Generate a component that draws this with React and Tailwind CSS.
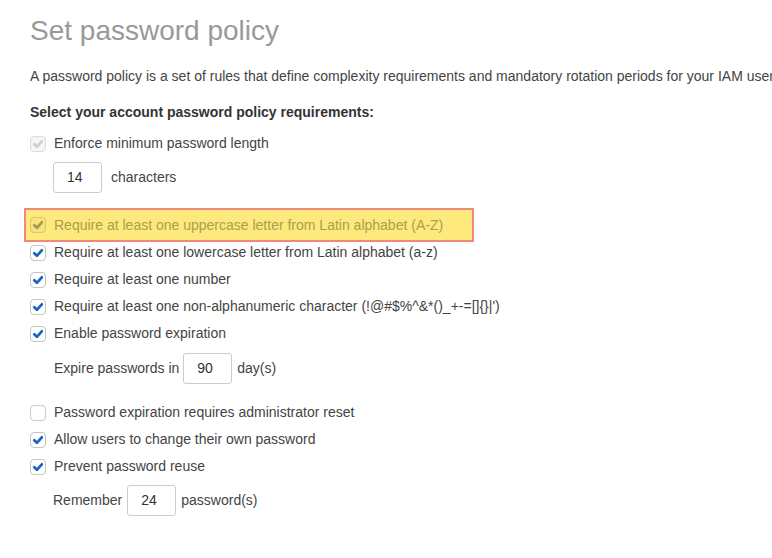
import React from "react";

const FONT = { fontFamily: '"Liberation Sans", Arial, sans-serif' };

/** Checkbox in the AWS console style. state: "on" | "off" | "disabled" | "dim" */
function Check({ state }) {
  const box =
    state === "off"
      ? "border-[#c9c9c9] bg-white"
      : state === "disabled"
      ? "border-[#dcdcdc] bg-[#f6f6f6]"
      : state === "dim"
      ? "border-[#d6c770] bg-[#fbe27e]"
      : "border-[#c4c4c4] bg-white";
  const stroke =
    state === "disabled" ? "#cfcfcf" : state === "dim" ? "#9d9a55" : "#1563c4";
  return (
    <span className={`flex h-4 w-4 shrink-0 items-center justify-center rounded-[4px] border ${box}`}>
      {state !== "off" && (
        <svg width="12" height="12" viewBox="0 0 12 12">
          <path d="M2.3 6.3 L4.9 8.8 L9.8 3.3" fill="none" stroke={stroke} strokeWidth="2.7" strokeLinecap="round" strokeLinejoin="round" />
        </svg>
      )}
    </span>
  );
}

function Row({ state = "on", children, className = "" }) {
  return (
    <div className={`flex h-[27px] items-center gap-2 ${className}`}>
      <Check state={state} />
      <span>{children}</span>
    </div>
  );
}

function NumBox({ value }) {
  return (
    <div className="flex h-[31px] w-[49px] items-center rounded-[3px] border border-[#cccccc] bg-white pl-[13px] text-[#333]">
      {value}
    </div>
  );
}

export default function App() {
  return (
    <div className="min-h-[558px] w-[772px] overflow-hidden bg-white pl-[30px] text-[14px] text-[#444]" style={FONT}>
      <h1 className="mt-[14px] h-[34px] text-[28px] leading-[34px] text-[#999999]">Set password policy</h1>

      <p className="mt-[18px] whitespace-nowrap leading-5">
        A password policy is a set of rules that define complexity requirements and mandatory rotation periods for your IAM users.
      </p>

      <p className="mt-4 leading-5 font-bold text-[#333]">Select your account password policy requirements:</p>

      <Row state="disabled" className="mt-2">Enforce minimum password length</Row>
      <div className="mt-[5px] flex items-center gap-[9px] pl-[23px]">
        <NumBox value="14" />
        <span>characters</span>
      </div>

      {/* highlighted row */}
      <div className="-ml-[6px] mt-[15px] -mb-[3px] flex h-[34px] w-[450px] items-center gap-2 border-2 border-[#f3877c] bg-[#fde97c] pl-[4px] text-[#a9a04f]">
        <Check state="dim" />
        <span>Require at least one uppercase letter from Latin alphabet (A-Z)</span>
      </div>

      <Row>Require at least one lowercase letter from Latin alphabet (a-z)</Row>
      <Row>Require at least one number</Row>
      <Row>{"Require at least one non-alphanumeric character (!@#$%^&*()_+-=[]{}|')"}</Row>
      <Row>Enable password expiration</Row>
      <div className="mt-[6px] flex items-center gap-1 pl-6">
        <span>Expire passwords in</span>
        <NumBox value="90" />
        <span className="pl-px">day(s)</span>
      </div>

      <Row state="off" className="mt-[15px]">Password expiration requires administrator reset</Row>
      <Row>Allow users to change their own password</Row>
      <Row>Prevent password reuse</Row>
      <div className="mt-[5px] flex items-center gap-[5px] pl-[23px]">
        <span>Remember</span>
        <NumBox value="24" />
        <span>password(s)</span>
      </div>
    </div>
  );
}
